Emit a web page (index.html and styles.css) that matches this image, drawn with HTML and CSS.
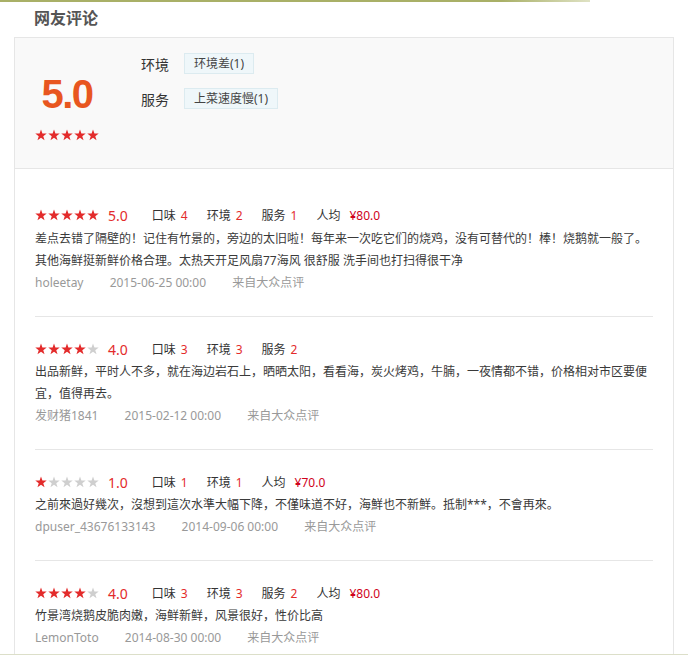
FILE: index.html
```html
<!DOCTYPE html>
<html lang="zh-CN">
<head>
    <meta charset="UTF-8">
    <title>网友评论</title>
    <link rel="stylesheet" href="styles.css">
</head>
<body>
<svg class="defs" width="0" height="0">
    <symbol id="star" viewBox="0 0 12 12">
        <polygon points="6,0.4 7.41,4.46 11.71,4.55 8.28,7.14 9.53,11.25 6,8.8 2.47,11.25 3.72,7.14 0.29,4.55 4.59,4.46"/>
    </symbol>
</svg>
<div class="topLine"></div>
<div class="page">
    <div class="title">网友评论</div>
    <div class="commentBox">
        <div class="summary">
            <div class="scoreBlock">
                <div class="score">5.0</div>
                <div class="stars">
                    <svg class="star on"><use href="#star"/></svg><svg class="star on"><use href="#star"/></svg><svg class="star on"><use href="#star"/></svg><svg class="star on"><use href="#star"/></svg><svg class="star on"><use href="#star"/></svg>
                </div>
            </div>
            <div class="tagList">
                <div class="tagRow">
                    <span class="tagLabel">环境</span>
                    <span class="tag">环境差(1)</span>
                </div>
                <div class="tagRow">
                    <span class="tagLabel">服务</span>
                    <span class="tag">上菜速度慢(1)</span>
                </div>
            </div>
        </div>

        <div class="reviewList">
            <div class="review first">
                <div class="reviewHead">
                    <div class="stars">
                        <svg class="star on"><use href="#star"/></svg><svg class="star on"><use href="#star"/></svg><svg class="star on"><use href="#star"/></svg><svg class="star on"><use href="#star"/></svg><svg class="star on"><use href="#star"/></svg>
                    </div>
                    <span class="rating">5.0</span>
                    <span class="item first">口味<span class="val">4</span></span>
                    <span class="item">环境<span class="val">2</span></span>
                    <span class="item">服务<span class="val">1</span></span>
                    <span class="item">人均<span class="price">¥80.0</span></span>
                </div>
                <div class="reviewText">差点去错了隔壁的！记住有竹景的，旁边的太旧啦！每年来一次吃它们的烧鸡，没有可替代的！棒！烧鹅就一般了。其他海鲜挺新鲜价格合理。太热天开足风扇77海风 很舒服 洗手间也打扫得很干净</div>
                <div class="reviewMeta">
                    <span>holeetay</span>
                    <span>2015-06-25 00:00</span>
                    <span>来自大众点评</span>
                </div>
            </div>

            <div class="review">
                <div class="reviewHead">
                    <div class="stars">
                        <svg class="star on"><use href="#star"/></svg><svg class="star on"><use href="#star"/></svg><svg class="star on"><use href="#star"/></svg><svg class="star on"><use href="#star"/></svg><svg class="star"><use href="#star"/></svg>
                    </div>
                    <span class="rating">4.0</span>
                    <span class="item first">口味<span class="val">3</span></span>
                    <span class="item">环境<span class="val">3</span></span>
                    <span class="item">服务<span class="val">2</span></span>
                </div>
                <div class="reviewText">出品新鲜，平时人不多，就在海边岩石上，晒晒太阳，看看海，炭火烤鸡，牛腩，一夜情都不错，价格相对市区要便宜，值得再去。</div>
                <div class="reviewMeta">
                    <span>发财猪1841</span>
                    <span>2015-02-12 00:00</span>
                    <span>来自大众点评</span>
                </div>
            </div>

            <div class="review">
                <div class="reviewHead">
                    <div class="stars">
                        <svg class="star on"><use href="#star"/></svg><svg class="star"><use href="#star"/></svg><svg class="star"><use href="#star"/></svg><svg class="star"><use href="#star"/></svg><svg class="star"><use href="#star"/></svg>
                    </div>
                    <span class="rating">1.0</span>
                    <span class="item first">口味<span class="val">1</span></span>
                    <span class="item">环境<span class="val">1</span></span>
                    <span class="item">人均<span class="price">¥70.0</span></span>
                </div>
                <div class="reviewText">之前來過好幾次，沒想到這次水準大幅下降，不僅味道不好，海鮮也不新鮮。抵制***，不會再來。</div>
                <div class="reviewMeta">
                    <span>dpuser_43676133143</span>
                    <span>2014-09-06 00:00</span>
                    <span>来自大众点评</span>
                </div>
            </div>

            <div class="review last">
                <div class="reviewHead">
                    <div class="stars">
                        <svg class="star on"><use href="#star"/></svg><svg class="star on"><use href="#star"/></svg><svg class="star on"><use href="#star"/></svg><svg class="star on"><use href="#star"/></svg><svg class="star"><use href="#star"/></svg>
                    </div>
                    <span class="rating">4.0</span>
                    <span class="item first">口味<span class="val">3</span></span>
                    <span class="item">环境<span class="val">3</span></span>
                    <span class="item">服务<span class="val">2</span></span>
                    <span class="item">人均<span class="price">¥80.0</span></span>
                </div>
                <div class="reviewText">竹景湾烧鹅皮脆肉嫩，海鲜新鲜，风景很好，性价比高</div>
                <div class="reviewMeta">
                    <span>LemonToto</span>
                    <span>2014-08-30 00:00</span>
                    <span>来自大众点评</span>
                </div>
            </div>
        </div>
    </div>
</div>
</body>
</html>
```

FILE: styles.css
```css
* {
    box-sizing: border-box;
}

body {
    margin: 0;
    font-family: "Noto Sans", "Noto Sans CJK SC", sans-serif;
    font-size: 12px;
    color: #333;
    background: #fff;
}

.defs {
    position: absolute;
}

.topLine {
    width: 590px;
    height: 2px;
    background: linear-gradient(to right, #a9b067 0%, #a9b067 85%, #dfe2c4 100%);
}

.page {
    padding-left: 14px;
    border-bottom: 1px solid #dcdfc9;
}

.title {
    height: 35px;
    line-height: 33px;
    padding-left: 20px;
    font-size: 16px;
    font-weight: bold;
    color: #555;
}

.commentBox {
    width: 660px;
    border: 1px solid #e6e6e6;
    border-bottom: none;
}

/* summary */
.summary {
    display: flex;
    height: 131px;
    padding: 15px 20px 0 20px;
    background: #f9f9f9;
    border-bottom: 1px solid #e6e6e6;
}

.scoreBlock {
    width: 64px;
    margin-top: 21px;
    text-align: center;
}

.score {
    font-family: "Liberation Sans", Arial, sans-serif;
    font-size: 40px;
    line-height: 40px;
    font-weight: bold;
    letter-spacing: -1.5px;
    color: #e8561f;
}

.scoreBlock .stars {
    margin-top: 15px;
}

.tagList {
    margin-left: 42px;
}

.tagRow {
    display: flex;
    align-items: center;
    height: 21px;
    margin-bottom: 14px;
}

.tagLabel {
    width: 43px;
    font-size: 14px;
}

.tag {
    height: 21px;
    line-height: 19px;
    padding: 0 9px;
    background: #eff7fa;
    border: 1px solid #dcebf0;
    font-size: 12px;
    color: #444;
}

/* stars */
.stars {
    display: flex;
    height: 12px;
}

.star {
    width: 12px;
    height: 12px;
    margin-right: 1px;
    fill: #cfcfcf;
}

.star:last-child {
    margin-right: 0;
}

.star.on {
    fill: #e32b2b;
}

/* reviews */
.reviewList {
    padding: 0 20px;
}

.review {
    padding: 20px 0 22px 0;
    border-bottom: 1px solid #e6e6e6;
}

.review.first {
    padding-top: 33px;
}

.review.first .reviewHead {
    height: 26px;
}

.review.last {
    padding-bottom: 5px;
    border-bottom: none;
}

.reviewHead {
    display: flex;
    align-items: center;
    height: 24px;
}

.rating {
    margin-left: 9px;
    font-size: 14px;
    color: #e32b2b;
}

.item {
    margin-right: 19px;
}

.item.first {
    margin-left: 24px;
}

.val {
    margin-left: 5px;
    color: #e32b2b;
}

.price {
    margin-left: 9px;
    color: #d0021b;
}

.reviewText {
    line-height: 22px;
    color: #3a3a3a;
}

.reviewMeta {
    line-height: 22px;
    color: #999;
}

.reviewMeta span {
    margin-right: 23px;
}
```
